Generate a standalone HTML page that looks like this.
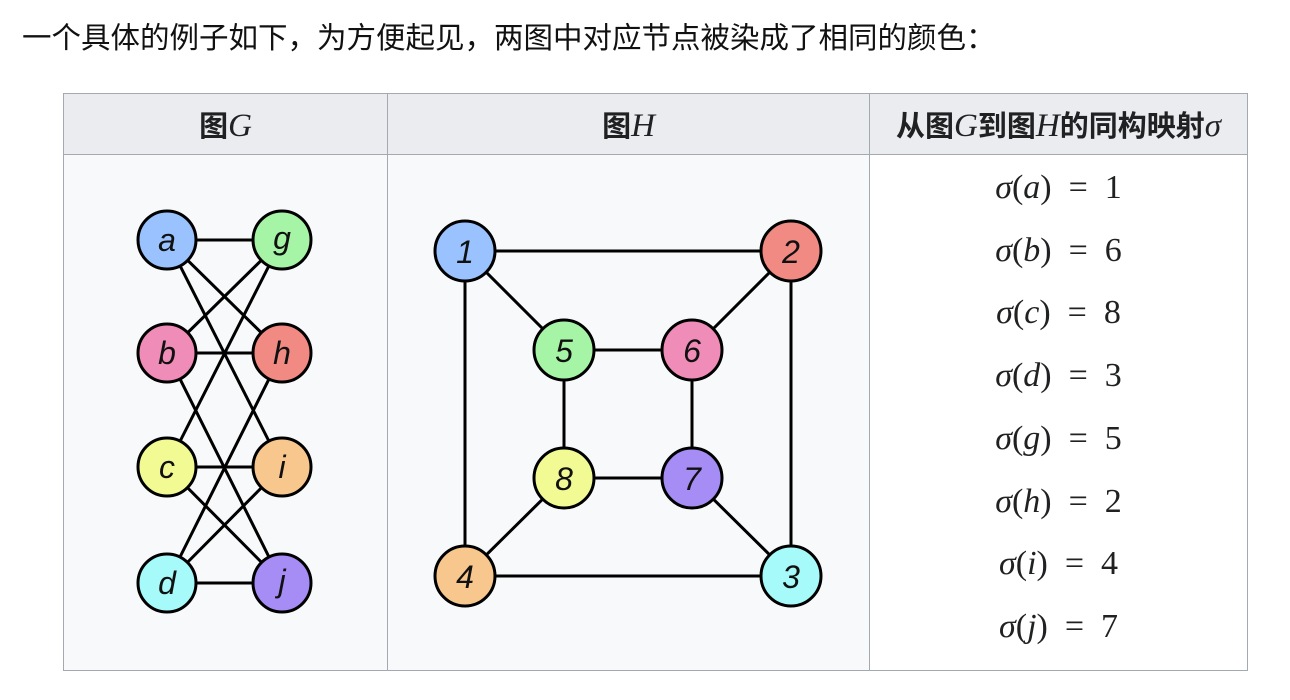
<!DOCTYPE html>
<html><head><meta charset="utf-8"><style>
body{margin:0;width:1290px;height:700px;background:#fff;font-family:"Liberation Sans","Noto Sans CJK SC",sans-serif;color:#202122;overflow:hidden;position:relative}
.t{position:absolute;left:22px;top:19px;font-size:29.5px;line-height:40px;color:#111;white-space:nowrap}
table{position:absolute;left:63px;top:93px;border-collapse:collapse}
td,th{border:1.5px solid #a2a9b1;padding:0;text-align:center;vertical-align:top}
th{background:#eaecf0;height:60px;font-size:29px;font-weight:bold;vertical-align:middle;white-space:nowrap}
.m{font-family:"Liberation Serif",serif;font-style:italic;font-weight:normal;font-size:33px}
td.g{background:#f8f9fa}
.s{font-family:"Liberation Serif",serif;font-size:34px;line-height:62.7px;margin-top:2px}
.s i{font-style:italic}
</style></head><body>
<div class="t">一个具体的例子如下，为方便起见，两图中对应节点被染成了相同的颜色：</div>
<table>
<tr><th style="width:323px">图<span class="m">G</span></th><th style="width:481px">图<span class="m">H</span></th><th style="width:377px">从图<span class="m">G</span>到图<span class="m">H</span>的同构映射<span class="m">σ</span></th></tr>
<tr><td class="g" style="height:515px"></td><td class="g"></td><td><div class="s">
<div><i>σ</i>(<i>a</i>)&nbsp; = &nbsp;1</div><div><i>σ</i>(<i>b</i>)&nbsp; = &nbsp;6</div><div><i>σ</i>(<i>c</i>)&nbsp; = &nbsp;8</div><div><i>σ</i>(<i>d</i>)&nbsp; = &nbsp;3</div><div><i>σ</i>(<i>g</i>)&nbsp; = &nbsp;5</div><div><i>σ</i>(<i>h</i>)&nbsp; = &nbsp;2</div><div><i>σ</i>(<i>i</i>)&nbsp; = &nbsp;4</div><div><i>σ</i>(<i>j</i>)&nbsp; = &nbsp;7</div></div></td></tr>
</table>
<svg style="position:absolute;left:0;top:0" width="1290" height="700" font-family="Liberation Sans,sans-serif" font-style="italic" font-size="32" text-anchor="middle">
<g stroke="#000" stroke-width="3">
<line x1="167" y1="240" x2="282" y2="240"/><line x1="167" y1="240" x2="282" y2="353"/><line x1="167" y1="240" x2="282" y2="467"/>
<line x1="167" y1="353" x2="282" y2="240"/><line x1="167" y1="353" x2="282" y2="353"/><line x1="167" y1="353" x2="282" y2="583"/>
<line x1="167" y1="467" x2="282" y2="240"/><line x1="167" y1="467" x2="282" y2="467"/><line x1="167" y1="467" x2="282" y2="583"/>
<line x1="167" y1="583" x2="282" y2="353"/><line x1="167" y1="583" x2="282" y2="467"/><line x1="167" y1="583" x2="282" y2="583"/>
<line x1="465" y1="251" x2="791" y2="251"/><line x1="465" y1="251" x2="465" y2="576"/><line x1="791" y1="251" x2="791" y2="576"/><line x1="465" y1="576" x2="791" y2="576"/>
<line x1="465" y1="251" x2="564" y2="350"/><line x1="791" y1="251" x2="692" y2="350"/><line x1="465" y1="576" x2="564" y2="478"/><line x1="791" y1="576" x2="692" y2="478"/>
<line x1="564" y1="350" x2="692" y2="350"/><line x1="564" y1="350" x2="564" y2="478"/><line x1="692" y1="350" x2="692" y2="478"/><line x1="564" y1="478" x2="692" y2="478"/>
</g>
<g stroke="#000" stroke-width="3">
<circle cx="167" cy="240" r="29" fill="#99c2ff"/><circle cx="282" cy="240" r="29" fill="#a6f5a6"/>
<circle cx="167" cy="353" r="29" fill="#f08cb8"/><circle cx="282" cy="353" r="29" fill="#f08a82"/>
<circle cx="167" cy="467" r="29" fill="#f2fa94"/><circle cx="282" cy="467" r="29" fill="#f7c78e"/>
<circle cx="167" cy="583" r="29" fill="#a6fafa"/><circle cx="282" cy="583" r="29" fill="#a68cf5"/>
<circle cx="465" cy="251" r="30" fill="#99c2ff"/><circle cx="791" cy="251" r="30" fill="#f08a82"/>
<circle cx="564" cy="350" r="30" fill="#a6f5a6"/><circle cx="692" cy="350" r="30" fill="#f08cb8"/>
<circle cx="564" cy="478" r="30" fill="#f2fa94"/><circle cx="692" cy="478" r="30" fill="#a68cf5"/>
<circle cx="465" cy="576" r="30" fill="#f7c78e"/><circle cx="791" cy="576" r="30" fill="#a6fafa"/>
</g>
<g fill="#111">
<text x="167" y="251">a</text><text x="282" y="249">g</text><text x="167" y="364">b</text><text x="282" y="364">h</text>
<text x="167" y="478">c</text><text x="282" y="478">i</text><text x="167" y="594">d</text><text x="282" y="592">j</text>
<text x="465" y="263">1</text><text x="791" y="263">2</text><text x="564" y="362">5</text><text x="692" y="362">6</text>
<text x="564" y="490">8</text><text x="692" y="490">7</text><text x="465" y="588">4</text><text x="791" y="588">3</text>
</g>
</svg>
</body></html>
